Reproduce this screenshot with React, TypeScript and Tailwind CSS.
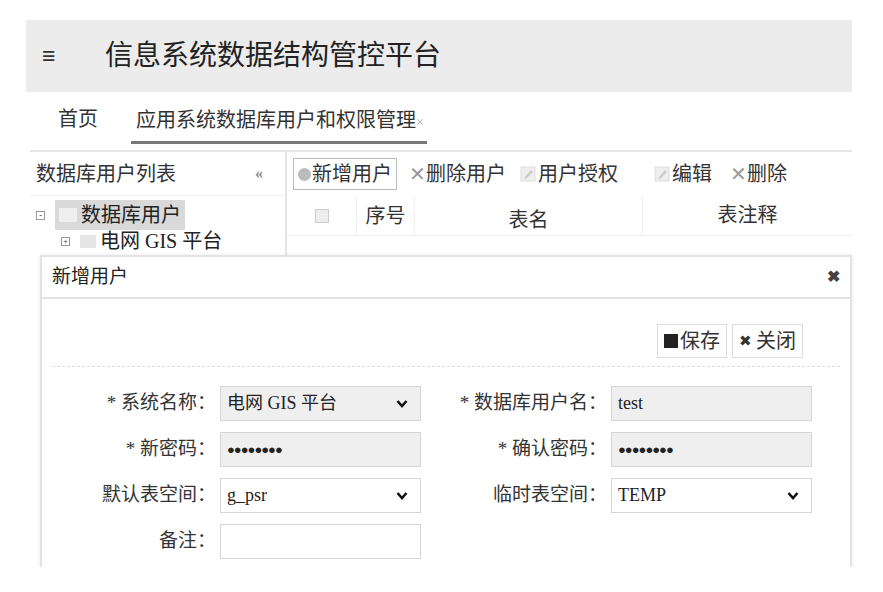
import React from "react";

const F = { fontFamily: '"Liberation Serif","Noto Sans CJK SC",serif' };

function Pencil() {
  return (
    <svg width="16" height="16" viewBox="0 0 16 16" className="mr-[2px]">
      <rect x="1" y="1" width="14" height="14" fill="#eee" stroke="#ddd" />
      <path d="M4 12 L11 4 L13 6 L6 13 Z" fill="#ccc" />
    </svg>
  );
}

function Field({ label, children, w }: { label: string; children: React.ReactNode; w: string }) {
  return (
    <div className="flex items-center">
      <div className={`${w} text-right text-[19px] text-[#333] pr-[4px]`}>{label}</div>
      {children}
    </div>
  );
}

function Chevron() {
  return (
    <svg width="12" height="10" viewBox="0 0 12 10" className="mr-[6px]">
      <path d="M1.5 2 L6 7 L10.5 2" fill="none" stroke="#111" strokeWidth="2.6" />
    </svg>
  );
}

function Box({ text, select, gray, dots }: { text?: string; select?: boolean; gray?: boolean; dots?: boolean }) {
  return (
    <div className={`w-[201px] h-[35px] border border-[#d6d6d6] ${gray ? "bg-[#efefef]" : "bg-white"} flex items-center justify-between px-[6px] text-[18px] text-[#222]`}>
      <span className={dots ? "text-[13px] tracking-[-1px]" : ""}>{dots ? "●●●●●●●●" : text}</span>
      {select && <Chevron />}
    </div>
  );
}

export default function App() {
  return (
    <div className="w-[883px] h-[592px] bg-white relative overflow-hidden" style={F}>
      <div className="pt-[20px] pl-[26px] w-[852px]">
        <div className="h-[72px] bg-[#ececec] flex items-center">
          <span className="ml-[16px] text-[24px] font-bold text-[#333] w-[63px]">≡</span>
          <span className="text-[28px] text-[#222]">信息系统数据结构管控平台</span>
        </div>
      </div>
      <div className="flex items-end h-[52px] ml-[58px] text-[20px] text-[#333]">
        <span className="pb-[10px]">首页</span>
        <div className="ml-[38px] flex flex-col">
          <span className="pb-[6px]">应用系统数据库用户和权限管理<span className="text-[14px] text-[#aaa]">×</span></span>
          <div className="h-[3px] bg-[#777] -ml-[5px] -mr-[3px]" />
        </div>
      </div>
      <div className="mt-[6px] ml-[30px] w-[822px] h-[420px] border-t-2 border-[#e5e5e5] flex">
        <div className="w-[257px] border-r-2 border-[#e5e5e5]">
          <div className="h-[44px] flex items-center justify-between px-[6px] border-b border-[#eee] text-[20px] text-[#333]">
            <span>数据库用户列表</span>
            <span className="text-[16px] font-bold text-[#888] mr-[16px]">«</span>
          </div>
          <div className="pl-[6px] pt-[4px] text-[20px] text-[#222]">
            <div className="flex items-center">
              <span className="w-[9px] h-[9px] border border-[#999] text-[8px] leading-[7px] text-center">-</span>
              <span className="ml-[10px] bg-[#d9d9d9] px-[4px] flex items-center"><span className="inline-block w-[18px] h-[14px] bg-[#eee] mr-[4px]" />数据库用户</span>
            </div>
            <div className="flex items-center ml-[25px] -mt-[4px]">
              <span className="w-[9px] h-[9px] border border-[#999] text-[8px] leading-[7px] text-center">+</span>
              <span className="inline-block w-[16px] h-[13px] bg-[#e5e5e5] ml-[10px] mr-[4px]" />电网 GIS 平台
            </div>
          </div>
        </div>
        <div className="flex-1">
          <div className="h-[44px] flex items-center pl-[6px] text-[20px] text-[#333]">
            <span className="border border-[#bbb] px-[4px] h-[32px] flex items-center">
              <span className="w-[13px] h-[13px] rounded-full bg-[#bbb] mr-[1px]" />新增用户
            </span>
            <span className="ml-[12px] flex items-center"><span className="text-[#999] text-[20px]">✕</span>删除用户</span>
            <span className="ml-[14px] flex items-center"><Pencil />用户授权</span>
            <span className="ml-[36px] flex items-center"><Pencil />编辑</span>
            <span className="ml-[18px] flex items-center"><span className="text-[#999] text-[20px]">✕</span>删除</span>
          </div>
          <div className="h-[40px] flex text-[20px] text-[#333] border-b border-[#eee]">
            <div className="w-[70px] flex items-center justify-center border-r border-[#eee]"><span className="w-[14px] h-[14px] border border-[#ccc] bg-[#eee]" /></div>
            <div className="w-[58px] flex items-center justify-center border-r border-[#eee]">序号</div>
            <div className="w-[228px] flex items-center justify-center border-r border-[#eee] pt-[8px]">表名</div>
            <div className="flex-1 flex items-center justify-center pb-[2px]">表注释</div>
          </div>
        </div>
      </div>
      <div className="absolute left-[40px] top-[255px] w-[812px] h-[320px] bg-white border-2 border-[#e3e3e3] shadow-[0_0_3px_rgba(0,0,0,0.1)]">
        <div className="h-[42px] flex items-center justify-between px-[10px] border-b-2 border-[#e3e3e3] text-[19px] text-[#222]">
          <span>新增用户</span>
          <span className="text-[16px] font-bold text-[#444]">✖</span>
        </div>
        <div className="flex justify-end gap-[5px] pr-[47px] pt-[25px]">
          <span className="h-[34px] border border-[#ddd] px-[6px] flex items-center text-[20px] text-[#333]"><span className="w-[14px] h-[14px] bg-[#222] mr-[2px]" />保存</span>
          <span className="h-[34px] border border-[#ddd] px-[6px] flex items-center text-[20px] text-[#333]"><span className="text-[15px] mr-[4px]">✖</span>关闭</span>
        </div>
        <div className="mx-[10px] mt-[8px] border-t border-dashed border-[#ddd]" />
        <div className="mt-[19px] flex flex-col gap-[11px]">
          <div className="flex">
            <Field label="* 系统名称：" w="w-[178px]"><Box text="电网 GIS 平台" select gray /></Field>
            <Field label="* 数据库用户名：" w="w-[190px]"><Box text="test" gray /></Field>
          </div>
          <div className="flex">
            <Field label="* 新密码：" w="w-[178px]"><Box dots gray /></Field>
            <Field label="* 确认密码：" w="w-[190px]"><Box dots gray /></Field>
          </div>
          <div className="flex">
            <Field label="默认表空间：" w="w-[178px]"><Box text="g_psr" select /></Field>
            <Field label="临时表空间：" w="w-[190px]"><Box text="TEMP" select /></Field>
          </div>
          <div className="flex">
            <Field label="备注：" w="w-[178px]"><Box /></Field>
          </div>
        </div>
      </div>
      <div className="absolute left-0 top-[567px] w-full h-[30px] bg-white" />
    </div>
  );
}
